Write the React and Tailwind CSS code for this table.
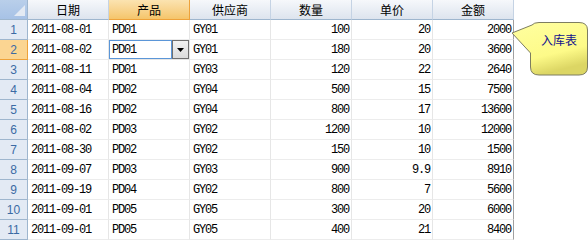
import React from "react";

const rows = [
  ["2011-08-01", "PD01", "GY01", "100", "20", "2000"],
  ["2011-08-02", "PD01", "GY01", "180", "20", "3600"],
  ["2011-08-11", "PD01", "GY03", "120", "22", "2640"],
  ["2011-08-04", "PD02", "GY04", "500", "15", "7500"],
  ["2011-08-16", "PD02", "GY04", "800", "17", "13600"],
  ["2011-08-02", "PD03", "GY02", "1200", "10", "12000"],
  ["2011-08-30", "PD02", "GY02", "150", "10", "1500"],
  ["2011-09-07", "PD03", "GY03", "900", "9.9", "8910"],
  ["2011-09-19", "PD04", "GY02", "800", "7", "5600"],
  ["2011-09-01", "PD05", "GY05", "300", "20", "6000"],
  ["2011-09-01", "PD05", "GY05", "400", "21", "8400"],
];

const headers = ["日期", "产品", "供应商", "数量", "单价", "金额"];

const mono = { fontFamily: '"Liberation Mono", "Noto Sans CJK SC", monospace' };
const cjk = { fontFamily: '"Noto Sans CJK SC", "Liberation Sans", sans-serif' };

export default function App() {
  return (
    <div className="relative w-[588px] h-[240px] overflow-hidden bg-white">
      <div className="w-[514px] border-b border-[#a0a0a0]">
        {/* header */}
        <div className="flex h-[20px]">
          <div className="relative w-[28px] h-[20px] bg-gradient-to-b from-[#b9cfea] to-[#a7c2e6] border-r border-b border-[#9eb6ce]">
            <svg className="absolute left-0 top-0" width="27" height="19">
              <polygon points="25,5 25,16 14,16" fill="#e3eaf3" />
            </svg>
          </div>
          {headers.map((h, i) => (
            <div
              key={h}
              className={
                i === 1
                  ? "w-[81px] h-[20px] flex items-center justify-center text-[12px] text-black bg-gradient-to-b from-[#fbe3b0] to-[#f5c56a] border-r border-b border-[#eea23a]"
                  : "w-[81px] h-[20px] flex items-center justify-center text-[12px] text-black bg-gradient-to-b from-[#f6f8fb] to-[#dde4ee] border-r border-b border-r-[#c5d3e4] border-b-[#9eb6ce] " +
                    (i === 5 ? "border-r-[#a0b4cc]" : "")
              }
              style={cjk}
            >
              {h}
            </div>
          ))}
        </div>
        {rows.map((r, ri) => (
          <div key={ri} className="flex h-[20px]">
            <div
              className={
                ri === 1
                  ? "w-[28px] h-[20px] flex items-center justify-center text-[12px] text-[#3b6aa4] bg-[#fbd592] border-r border-b border-[#eea23a]"
                  : "w-[28px] h-[20px] flex items-center justify-center text-[12px] text-[#3b6aa4] bg-[#e3eaf4] border-r border-b border-[#9eb6ce]"
              }
              style={{ fontFamily: '"Liberation Sans", sans-serif' }}
            >
              {ri + 1}
            </div>
            {r.map((c, ci) => {
              const right = ci >= 3;
              const last = ci === 5;
              if (ri === 1 && ci === 1) {
                return (
                  <div key={ci} className="w-[81px] h-[20px] flex border-r border-b border-[#e6e6e6]">
                    <div
                      className="w-[63px] h-[19px] border border-[#5b96d8] bg-white flex items-center pl-[2px] text-[12px] tracking-[-1.2px] text-black"
                      style={mono}
                    >
                      {c}
                    </div>
                    <div className="w-[17px] h-[19px] border border-[#707070] bg-gradient-to-b from-[#f2f2f2] to-[#dcdcdc] flex items-center justify-center">
                      <svg width="7" height="4">
                        <polygon points="0,0 7,0 3.5,4" fill="#000" />
                      </svg>
                    </div>
                  </div>
                );
              }
              return (
                <div
                  key={ci}
                  className={
                    "w-[81px] h-[20px] flex items-center text-[12px] tracking-[-1.2px] text-black border-b border-[#ececec] border-r " +
                    (last ? "border-r-[#a0a0a0] " : "border-r-[#e6e6e6] ") +
                    (right ? "justify-end pr-[2px]" : "pl-[3px]")
                  }
                  style={mono}
                >
                  {c}
                </div>
              );
            })}
          </div>
        ))}
      </div>

      {/* callout */}
      <div className="absolute left-[510px] top-[19px] w-[78px] h-[58px]">
        <svg width="78" height="58" className="absolute left-0 top-0">
          <defs>
            <linearGradient id="cg" x1="0" y1="0" x2="0.35" y2="1">
              <stop offset="0" stopColor="#ffffa0" />
              <stop offset="0.7" stopColor="#fdfa88" />
              <stop offset="1" stopColor="#dcd664" />
            </linearGradient>
          </defs>
          <path
            d="M2 14 L22 6 Q24 3.5 29 3.5 L69 3.5 Q77.5 3.5 77.5 11 L77.5 48 Q77.5 56 69 56 L29 56 Q20.5 56 20.5 48 L20.5 34 Z"
            fill="url(#cg)"
            stroke="#7d7d60"
            strokeWidth="1"
          />
        </svg>
        <div
          className="absolute left-[20px] top-[12px] w-[58px] text-center text-[12px] text-[#12128c]"
          style={cjk}
        >
          入库表
        </div>
      </div>
    </div>
  );
}
